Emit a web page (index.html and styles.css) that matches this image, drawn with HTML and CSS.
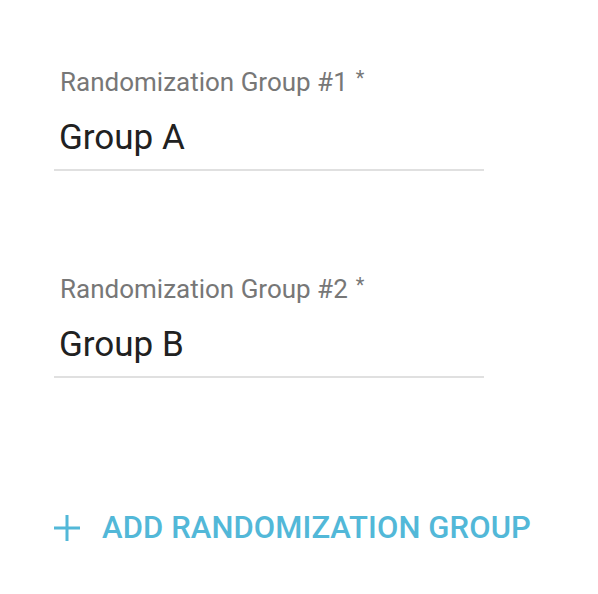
FILE: index.html
```html
<!DOCTYPE html>
<html lang="en">
<head>
    <meta charset="UTF-8">
    <meta name="viewport" content="width=device-width, initial-scale=1.0">
    <title>Randomization Groups</title>
    <link rel="stylesheet" href="styles.css">
</head>
<body>
    <div class="groups">
        <div class="field">
            <label class="field-label">Randomization Group #1<span class="req">*</span></label>
            <div class="field-input">Group A</div>
        </div>
        <div class="field">
            <label class="field-label">Randomization Group #2<span class="req">*</span></label>
            <div class="field-input">Group B</div>
        </div>
        <button class="add-btn">
            <svg class="add-icon" viewBox="0 0 26 26" width="26" height="26">
                <path d="M13 0v26M0 13h26" stroke="currentColor" stroke-width="3" fill="none"/>
            </svg>
            <span>ADD RANDOMIZATION GROUP</span>
        </button>
    </div>
</body>
</html>
```

FILE: styles.css
```css
* {
    margin: 0;
    padding: 0;
    box-sizing: border-box;
}
body {
    background: #fff;
    font-family: Roboto, "Liberation Sans", sans-serif;
}

.groups {
    padding: 67px 0 0 54px;
}

.field {
    width: 430px;
    border-bottom: 2px solid #e0e0e0;
    padding-bottom: 9px;
}
.field + .field {
    margin-top: 103px;
}

.field-label {
    display: block;
    padding-left: 6px;
    font-size: 26px;
    line-height: 30px;
    color: #777;
}
.req {
    font-size: 20px;
    line-height: 1;
    vertical-align: 6px;
    margin-left: 8px;
}

.field-input {
    padding: 19px 0 0 5px;
    font-size: 35px;
    line-height: 44px;
    color: #212121;
}

.add-btn {
    margin-top: 132px;
    display: flex;
    align-items: center;
    gap: 22px;
    border: 0;
    background: none;
    color: #52b8d8;
    font-family: Roboto, "Liberation Sans", sans-serif;
    font-weight: 500;
    font-size: 31px;
    line-height: 36px;
    letter-spacing: 0.1px;
}
.add-icon {
    display: block;
}
```
